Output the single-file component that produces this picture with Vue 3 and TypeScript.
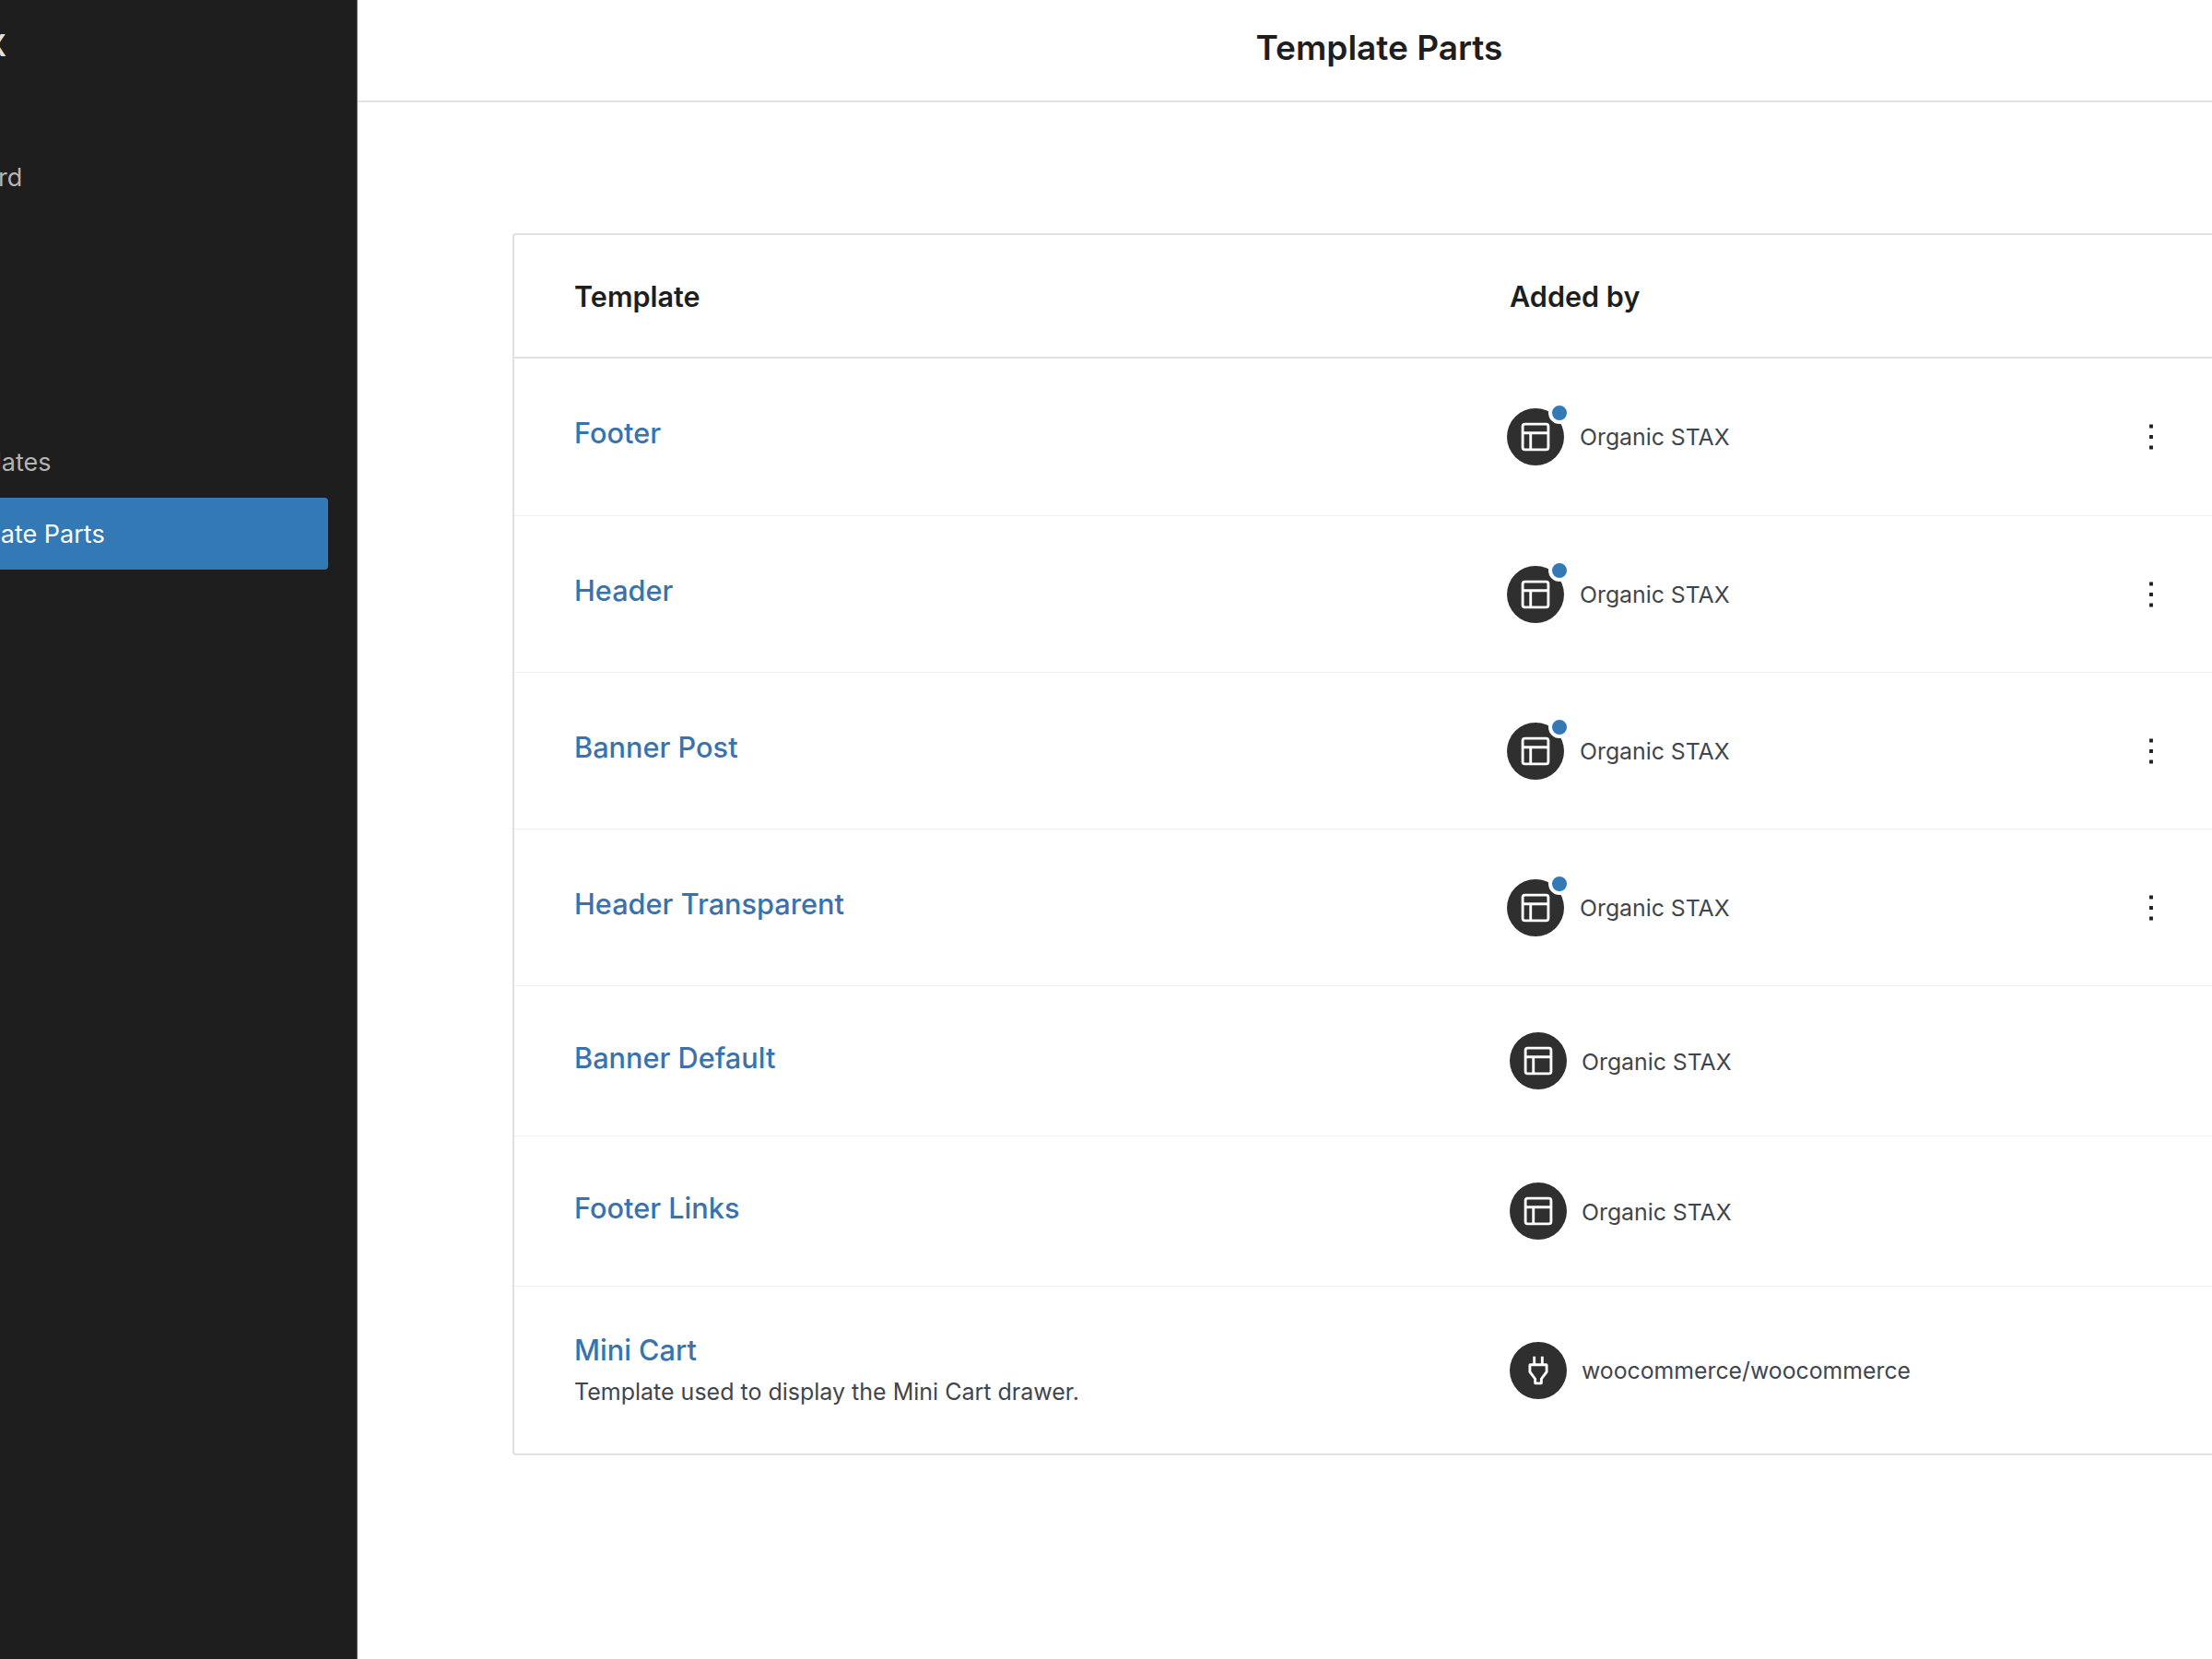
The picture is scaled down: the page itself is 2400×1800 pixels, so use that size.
<template>
  <div class="page">
    <aside class="sidebar">
      <div class="brand">Organic STAX</div>
      <nav class="nav">
        <a class="nav-item dashboard">Dashboard</a>
        <a class="nav-item templates">Templates</a>
        <a class="nav-item active">Template Parts</a>
      </nav>
    </aside>
    <main class="main">
      <header class="topbar">
        <h1>Template Parts</h1>
      </header>
      <div class="content">
        <section class="card">
          <div class="row head">
            <div>Template</div>
            <div>Added by</div>
          </div>
          <div
            v-for="part in parts"
            :key="part.name"
            :class="['row', part.kind]"
          >
            <div class="name-cell">
              <a class="name">{{ part.name }}</a>
              <p v-if="part.description" class="description">{{ part.description }}</p>
            </div>
            <div class="author">
              <span class="avatar">
                <svg v-if="part.plugin" viewBox="0 0 24 24" width="46" height="46">
                  <path :d="plugIcon" />
                </svg>
                <svg v-else viewBox="0 0 24 24" width="46" height="46">
                  <path :d="layoutIcon" />
                </svg>
                <span v-if="part.kind === 'custom'" class="badge"></span>
              </span>
              <span class="author-name">{{ part.author }}</span>
            </div>
            <button v-if="part.kind === 'custom'" class="more" type="button" aria-label="Actions">
              <svg viewBox="0 0 24 24" width="46" height="46">
                <path d="M13 19h-2v-2h2v2zm0-6h-2v-2h2v2zm0-6h-2V5h2v2z" />
              </svg>
            </button>
          </div>
        </section>
      </div>
    </main>
  </div>
</template>

<script setup lang="ts">
interface Part {
  name: string
  author: string
  kind: 'custom' | 'theme' | 'last'
  plugin?: boolean
  description?: string
}

const layoutIcon =
  'M18 5.5H6a.5.5 0 00-.5.5v3h13V6a.5.5 0 00-.5-.5zm.5 5H10v8h8a.5.5 0 00.5-.5v-7.5zm-10 0h-3V18a.5.5 0 00.5.5h2.5v-8zM6 4h12a2 2 0 012 2v12a2 2 0 01-2 2H6a2 2 0 01-2-2V6a2 2 0 012-2z'
const plugIcon =
  'M10.5 4v4h3V4H15v4h1.5a1 1 0 011 1v4l-3 4v2a1 1 0 01-1 1h-3a1 1 0 01-1-1v-2l-3-4V9a1 1 0 011-1H9V4h1.5zm.5 12.5v2h2v-2l3-4v-3H8v3l3 4z'

const parts: Part[] = [
  { name: 'Footer', author: 'Organic STAX', kind: 'custom' },
  { name: 'Header', author: 'Organic STAX', kind: 'custom' },
  { name: 'Banner Post', author: 'Organic STAX', kind: 'custom' },
  { name: 'Header Transparent', author: 'Organic STAX', kind: 'custom' },
  { name: 'Banner Default', author: 'Organic STAX', kind: 'theme' },
  { name: 'Footer Links', author: 'Organic STAX', kind: 'theme' },
  {
    name: 'Mini Cart',
    author: 'woocommerce/woocommerce',
    kind: 'last',
    plugin: true,
    description: 'Template used to display the Mini Cart drawer.',
  },
]
</script>

<style>
html,
body {
  margin: 0;
  background: #fff;
}
</style>

<style scoped>
.page {
  display: flex;
  width: 2400px;
  height: 1800px;
  overflow: hidden;
  font-family: Inter, "Liberation Sans", sans-serif;
  color: #1e1e1e;
}

.sidebar {
  flex: none;
  width: 387px;
  background: #1e1e1e;
  border-right: 1px solid #6a6a6a;
  overflow: hidden;
}

.brand {
  width: 242px;
  margin: 30px 0 0 -235px;
  font-size: 32px;
  font-weight: 600;
  line-height: 40px;
  white-space: nowrap;
  text-align: right;
  color: #e0e0e0;
}

.nav {
  display: flex;
  flex-direction: column;
  margin-top: 83px;
}

.nav-item {
  display: flex;
  align-items: center;
  height: 78px;
  box-sizing: border-box;
  font-size: 27px;
  white-space: nowrap;
  color: #b4b4b4;
  border-radius: 4px;
}

.nav-item.dashboard {
  margin-left: -115px;
}

.nav-item.templates {
  margin-top: 231px;
  margin-left: -76px;
}

.nav-item.active {
  width: 442px;
  margin-left: -86px;
  padding-left: 9px;
  background: #3379b6;
  color: #fff;
}

.main {
  flex: 1;
  min-width: 0;
}

.topbar {
  display: flex;
  align-items: center;
  justify-content: center;
  height: 111px;
  box-sizing: border-box;
  border-bottom: 2px solid #e2e2e2;
  padding-bottom: 6px;
  margin-right: -205px;
}

.topbar h1 {
  margin: 0;
  font-size: 37px;
  font-weight: 600;
  line-height: 50px;
  color: #1e1e1e;
}

.content {
  padding: 142px 0 0 168px;
}

.card {
  width: 2200px;
  border: 2px solid #e0e0e0;
  border-radius: 4px;
}

.row {
  position: relative;
  display: grid;
  grid-template-columns: 1015px 1fr;
  align-items: center;
  box-sizing: border-box;
  padding-left: 65px;
  border-top: 1px solid #f0f0f0;
}

.row.head {
  height: 134px;
  border-top: 0;
  border-bottom: 2px solid #e0e0e0;
  font-size: 30.6px;
  font-weight: 600;
}

.row.head + .row {
  border-top: 0;
}

.row.custom {
  height: 170px;
}

.row.theme {
  height: 163px;
}

.row.last {
  height: 182px;
}

.name-cell {
  margin-top: -8px;
}

.row.theme .name-cell {
  margin-top: -6px;
}

.row.last .name-cell {
  margin-top: -2px;
}

.name {
  display: block;
  font-size: 30.7px;
  font-weight: 500;
  line-height: 42px;
  color: #3a72ad;
}

.description {
  margin: 6px 0 0;
  font-size: 25px;
  line-height: 36px;
  color: #40464d;
}

.author {
  display: flex;
  align-items: center;
  gap: 16px;
}

.row.custom .author {
  margin-left: -3px;
  gap: 17px;
}

.avatar {
  position: relative;
  display: flex;
  align-items: center;
  justify-content: center;
  width: 62px;
  height: 62px;
  border-radius: 50%;
  background: #2f2f2f;
}

.avatar svg {
  fill: #fff;
}

.badge {
  position: absolute;
  top: -7px;
  right: -7px;
  width: 16px;
  height: 16px;
  border: 4px solid #fff;
  border-radius: 50%;
  background: #3379b6;
}

.author-name {
  font-size: 24.8px;
  color: #40464d;
}

.row.theme .author-name {
  margin-top: 2px;
}

.more {
  position: absolute;
  left: 1753px;
  top: 50%;
  width: 46px;
  height: 46px;
  margin-top: -23px;
  padding: 0;
  border: 0;
  background: none;
}

.more svg {
  display: block;
  fill: #1e1e1e;
}
</style>
